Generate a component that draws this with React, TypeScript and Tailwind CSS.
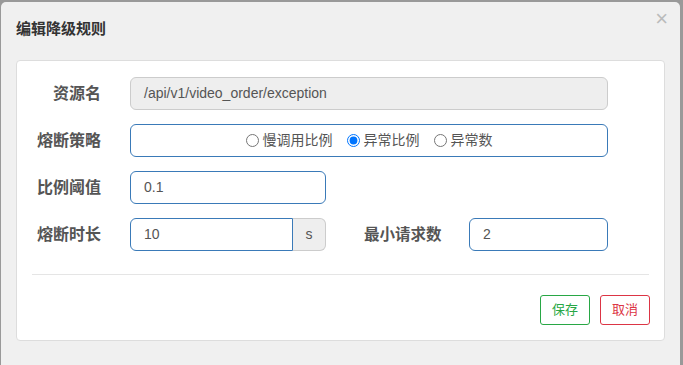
import React from 'react'

const cjk = { fontFamily: '"Liberation Sans", "Noto Sans CJK SC", sans-serif' }

const strategies = [
  { id: 'slow', label: '慢调用比例', checked: false },
  { id: 'ratio', label: '异常比例', checked: true },
  { id: 'count', label: '异常数', checked: false },
]

const Label = ({ children }: { children: React.ReactNode }) => (
  <label className="w-[84px] shrink-0 text-right text-[16px] font-bold text-[#555]">{children}</label>
)

const App = () => {
  return (
    <div className="w-[683px] h-[365px] overflow-hidden bg-[#999] pl-[1px] pt-[2px]" style={cjk}>
      <div className="relative w-[679px] h-[363px] rounded-t-[5px] bg-[#f0f0f0] px-[15px]">
        <button className="absolute right-[12px] top-[6px] text-[22px] leading-none text-[#bbb]">×</button>
        <h4 className="pt-[17px] text-[15px] font-bold leading-[20px] text-[#333]">编辑降级规则</h4>

        <div className="mt-[21px] h-[281px] w-[649px] rounded-[4px] border border-[#ddd] bg-white">
          <div className="flex flex-col gap-[14px] pt-[16px]">
            <div className="flex items-center">
              <Label>资源名</Label>
              <div className="ml-[29px] flex h-[33px] w-[478px] items-center rounded-[6px] border border-[#ccc] bg-[#eee] px-[13px] text-[14px] text-[#555]">
                /api/v1/video_order/exception
              </div>
            </div>

            <div className="flex items-center">
              <Label>熔断策略</Label>
              <div className="ml-[29px] flex h-[33px] w-[478px] items-center justify-center gap-[14px] rounded-[6px] border border-[#3a7ab8] text-[14px] text-[#555]">
                {strategies.map((s) => (
                  <label key={s.id} className="flex items-center gap-[4px]">
                    <input type="radio" name="strategy" defaultChecked={s.checked} className="m-0 h-[13px] w-[13px]" />
                    <span>{s.label}</span>
                  </label>
                ))}
              </div>
            </div>

            <div className="flex items-center">
              <Label>比例阈值</Label>
              <div className="ml-[29px] flex h-[33px] w-[196px] items-center rounded-[6px] border border-[#3a7ab8] px-[13px] text-[14px] text-[#555]">
                0.1
              </div>
            </div>

            <div className="flex items-center">
              <Label>熔断时长</Label>
              <div className="ml-[29px] flex h-[33px] w-[196px]">
                <div className="flex flex-1 items-center rounded-l-[6px] border border-[#3a7ab8] px-[13px] text-[14px] text-[#555]">
                  10
                </div>
                <div className="flex w-[33px] items-center justify-center rounded-r-[6px] border border-l-0 border-[#ccc] bg-[#eee] text-[14px] text-[#555]">
                  s
                </div>
              </div>
              <div className="ml-[38px] w-[80px] text-[15.5px] font-bold text-[#555]">最小请求数</div>
              <div className="ml-[25px] flex h-[33px] w-[139px] items-center rounded-[6px] border border-[#3a7ab8] px-[13px] text-[14px] text-[#555]">
                2
              </div>
            </div>
          </div>

          <div className="mx-[15px] mt-[23px] border-t border-[#e5e5e5]" />

          <div className="mr-[14px] mt-[20px] flex justify-end gap-[10px]">
            <button className="h-[30px] w-[50px] rounded-[3px] border border-[#28a745] text-[13px] text-[#28a745]">保存</button>
            <button className="h-[30px] w-[50px] rounded-[3px] border border-[#dc3545] text-[13px] text-[#dc3545]">取消</button>
          </div>
        </div>
      </div>
    </div>
  )
}

export default App
